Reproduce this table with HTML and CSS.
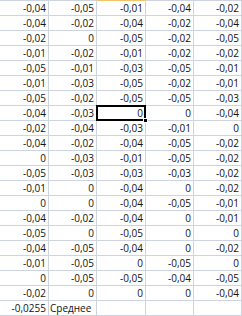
FILE: index.html
```html
<!DOCTYPE html>
<html>
<head>
<meta charset="utf-8">
<link rel="stylesheet" href="styles.css">
</head>
<body>
<div class="sheet">
<div class="c">-0,04</div><div class="c">-0,05</div><div class="c hdr-sel">-0,01</div><div class="c">-0,04</div><div class="c">-0,02</div>
<div class="c">-0,04</div><div class="c">-0,02</div><div class="c">-0,04</div><div class="c">-0,02</div><div class="c">-0,04</div>
<div class="c">-0,02</div><div class="c">0</div><div class="c">-0,05</div><div class="c">-0,02</div><div class="c">-0,05</div>
<div class="c">-0,01</div><div class="c">-0,02</div><div class="c">-0,01</div><div class="c">-0,02</div><div class="c">-0,02</div>
<div class="c">-0,05</div><div class="c">-0,01</div><div class="c">-0,03</div><div class="c">-0,05</div><div class="c">-0,01</div>
<div class="c">-0,01</div><div class="c">-0,03</div><div class="c">-0,05</div><div class="c">-0,02</div><div class="c">-0,01</div>
<div class="c">-0,05</div><div class="c">-0,02</div><div class="c">-0,05</div><div class="c">-0,05</div><div class="c">-0,03</div>
<div class="c">-0,04</div><div class="c">-0,03</div><div class="c sel">0</div><div class="c">0</div><div class="c">-0,04</div>
<div class="c">-0,02</div><div class="c">-0,04</div><div class="c">-0,03</div><div class="c">-0,01</div><div class="c">0</div>
<div class="c">-0,04</div><div class="c">-0,02</div><div class="c">-0,04</div><div class="c">-0,05</div><div class="c">-0,02</div>
<div class="c">0</div><div class="c">-0,03</div><div class="c">-0,01</div><div class="c">-0,05</div><div class="c">-0,02</div>
<div class="c">-0,05</div><div class="c">-0,03</div><div class="c">-0,03</div><div class="c">-0,03</div><div class="c">-0,02</div>
<div class="c">-0,01</div><div class="c">0</div><div class="c">-0,04</div><div class="c">0</div><div class="c">-0,02</div>
<div class="c">0</div><div class="c">0</div><div class="c">-0,04</div><div class="c">-0,05</div><div class="c">-0,01</div>
<div class="c">-0,04</div><div class="c">-0,02</div><div class="c">-0,04</div><div class="c">0</div><div class="c">-0,01</div>
<div class="c">-0,05</div><div class="c">0</div><div class="c">-0,05</div><div class="c">0</div><div class="c">0</div>
<div class="c">-0,04</div><div class="c">-0,05</div><div class="c">-0,04</div><div class="c">0</div><div class="c">-0,02</div>
<div class="c">-0,01</div><div class="c">-0,05</div><div class="c">0</div><div class="c">-0,05</div><div class="c">0</div>
<div class="c">0</div><div class="c">-0,05</div><div class="c">-0,05</div><div class="c">-0,04</div><div class="c">-0,05</div>
<div class="c">-0,02</div><div class="c">0</div><div class="c">0</div><div class="c">0</div><div class="c">-0,04</div>
<div class="c">-0,0255</div><div class="c txt">Среднее</div><div class="c"></div><div class="c"></div><div class="c"></div>
</div>
</body>
</html>
```

FILE: styles.css
```css
html, body {
  margin: 0;
  padding: 0;
  background: #ffffff;
}

.sheet {
  display: grid;
  grid-template-columns: 48px 47px 48px 47px 47px;
  grid-auto-rows: 14px;
  column-gap: 1px;
  row-gap: 1px;
  padding: 1px 1px 1px 0;
  width: 241px;
  background: #cdd4e0;
  font-family: "Open Sans", "Liberation Sans", sans-serif;
  font-size: 10px;
  color: #111111;
}

.c {
  background: #ffffff;
  text-align: right;
  padding-right: 2px;
  line-height: 14px;
  white-space: nowrap;
  overflow: visible;
  position: relative;
}

.txt {
  text-align: left;
  padding-left: 1px;
  padding-right: 0;
}

.hdr-sel {
  box-shadow: 0 -1px 0 #f1c46a;
}

.sel {
  box-shadow: 0 0 0 1px #000000, inset 0 0 0 1px #000000;
  z-index: 2;
}

.sel::after {
  content: "";
  position: absolute;
  right: -3px;
  bottom: -3px;
  width: 3px;
  height: 3px;
  background: #000000;
  border: 1px solid #ffffff;
}
```
